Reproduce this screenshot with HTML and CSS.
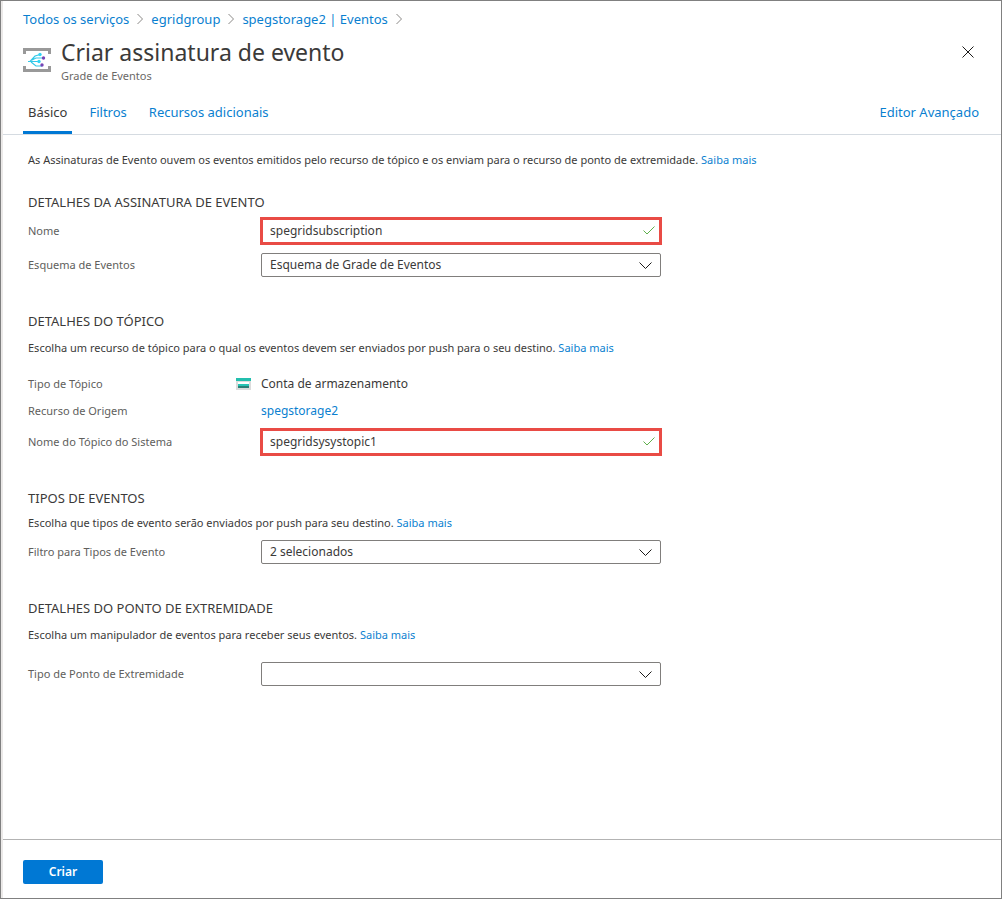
FILE: index.html
```html
<!DOCTYPE html>
<html lang="pt-BR">
<head>
<meta charset="utf-8">
<meta name="viewport" content="width=device-width, initial-scale=1">
<title>Criar assinatura de evento</title>
<link rel="stylesheet" href="styles.css">
</head>
<body>
<form class="blade">
  <header class="header">
    <nav class="breadcrumb" aria-label="Trilha">
      <a href="#">Todos os serviços</a>
      <svg class="crumb-sep" viewBox="0 0 6 12"><path d="M0.5 1l5 5-5 5"/></svg>
      <a href="#">egridgroup</a>
      <svg class="crumb-sep" viewBox="0 0 6 12"><path d="M0.5 1l5 5-5 5"/></svg>
      <a href="#">spegstorage2 | Eventos</a>
      <svg class="crumb-sep" viewBox="0 0 6 12"><path d="M0.5 1l5 5-5 5"/></svg>
    </nav>
    <div class="title-bar">
      <svg class="title-icon" viewBox="0 0 28 26">
        <path fill="#999" d="M0 1h28v6h-3V4H3v3H0zM0 19h3v3h22v-3h3v6H0z"/>
        <g fill="none" stroke="#32c8e8" stroke-width="1.2">
          <path d="M5 14.500h11M7 14.500l5-5.500 5-1.500M9 13l4-2h6M8 15l5 4h6"/>
        </g>
        <g fill="#32d4f5"><circle cx="17" cy="7.500" r="1.700"/><circle cx="16" cy="14.500" r="1.700"/></g>
        <g fill="#7545b5"><circle cx="20.500" cy="11" r="1.700"/><circle cx="19" cy="18" r="1.700"/></g>
      </svg>
      <div class="title-text">
        <h1 class="title">Criar assinatura de evento</h1>
        <p class="subtitle">Grade de Eventos</p>
      </div>
      <button class="close" type="button" aria-label="Fechar">
        <svg viewBox="0 0 12 12"><path d="M0.500 0.500l11 11M11.500 0.500l-11 11"/></svg>
      </button>
    </div>
    <nav class="tabs" aria-label="Seções">
      <a class="tab tab-active" href="#" aria-current="page">Básico</a>
      <a class="tab" href="#">Filtros</a>
      <a class="tab" href="#">Recursos adicionais</a>
      <a class="tab tab-end" href="#">Editor Avançado</a>
    </nav>
  </header>

  <main class="content">
    <p class="text">As Assinaturas de Evento ouvem os eventos emitidos pelo recurso de tópico e os enviam para o recurso de ponto de extremidade. <a href="#">Saiba mais</a></p>

    <section class="section section-first">
      <h2 class="heading">DETALHES DA ASSINATURA DE EVENTO</h2>
      <div class="rows">
        <div class="row">
          <label class="label" for="name">Nome</label>
          <div class="field">
            <input class="control control-marked" id="name" type="text" value="spegridsubscription">
            <svg class="check" viewBox="0 0 12 9"><path d="M0.500 4.500l3.500 3.500 7.500-7.500"/></svg>
          </div>
        </div>
        <div class="row">
          <label class="label" for="schema">Esquema de Eventos</label>
          <div class="field">
            <select class="control" id="schema"><option>Esquema de Grade de Eventos</option></select>
            <svg class="chevron" viewBox="0 0 13 8"><path d="M0.500 0.500l6 6 6-6"/></svg>
          </div>
        </div>
      </div>
    </section>

    <section class="section">
      <h2 class="heading">DETALHES DO TÓPICO</h2>
      <p class="text">Escolha um recurso de tópico para o qual os eventos devem ser enviados por push para o seu destino. <a href="#">Saiba mais</a></p>
      <div class="rows rows-topic">
        <div class="row">
          <span class="label">Tipo de Tópico</span>
          <span class="value value-icon">
            <svg class="storage" viewBox="0 0 15 12">
              <path fill="#dcdcdc" d="M0 3h15v9H0z"/>
              <path fill="#23bfae" d="M0 0h15v3H0z"/>
              <path fill="#fff" d="M2 4h11v2H2z"/>
              <path fill="#28c4b4" d="M2 6h11v2H2z"/>
              <path fill="#2b8077" d="M2 8h11v2H2z"/>
            </svg>
            Conta de armazenamento
          </span>
        </div>
        <div class="row">
          <span class="label">Recurso de Origem</span>
          <a class="value" href="#">spegstorage2</a>
        </div>
        <div class="row">
          <label class="label" for="topic">Nome do Tópico do Sistema</label>
          <div class="field">
            <input class="control control-marked" id="topic" type="text" value="spegridsysystopic1">
            <svg class="check" viewBox="0 0 12 9"><path d="M0.500 4.500l3.500 3.500 7.500-7.500"/></svg>
          </div>
        </div>
      </div>
    </section>

    <section class="section section-types">
      <h2 class="heading">TIPOS DE EVENTOS</h2>
      <p class="text">Escolha que tipos de evento serão enviados por push para seu destino. <a href="#">Saiba mais</a></p>
      <div class="rows">
        <div class="row">
          <label class="label" for="types">Filtro para Tipos de Evento</label>
          <div class="field">
            <select class="control" id="types"><option>2 selecionados</option></select>
            <svg class="chevron" viewBox="0 0 13 8"><path d="M0.500 0.500l6 6 6-6"/></svg>
          </div>
        </div>
      </div>
    </section>

    <section class="section">
      <h2 class="heading">DETALHES DO PONTO DE EXTREMIDADE</h2>
      <p class="text">Escolha um manipulador de eventos para receber seus eventos. <a href="#">Saiba mais</a></p>
      <div class="rows rows-endpoint">
        <div class="row">
          <label class="label" for="endpoint">Tipo de Ponto de Extremidade</label>
          <div class="field">
            <select class="control" id="endpoint"><option></option></select>
            <svg class="chevron" viewBox="0 0 13 8"><path d="M0.500 0.500l6 6 6-6"/></svg>
          </div>
        </div>
      </div>
    </section>
  </main>

  <footer class="footer">
    <button class="create" type="button">Criar</button>
  </footer>
</form>
</body>
</html>
```
FILE: styles.css
```css
* { box-sizing: border-box; }
body {
  margin: 0;
  font-family: "Noto Sans", "Open Sans", sans-serif;
  font-size: 13px;
  line-height: 20px;
  color: #3b3a39;
  background: #fff;
}
h1, h2, p { margin: 0; font-weight: 400; }
a { color: #0a7fd0; text-decoration: none; }
svg { display: block; fill: none; }

.blade {
  display: flex;
  flex-direction: column;
  min-height: 100vh;
  border: 1px solid #808080;
  box-shadow: inset 2px 0 #ebe9e8;
  padding-left: 2px;
}

.header { border-bottom: 1px solid #d5dbe1; }
.breadcrumb {
  display: flex;
  align-items: center;
  gap: 8px;
  padding: 8px 20px 0;
}
.crumb-sep { width: 6px; height: 12px; stroke: #8a8886; }

.title-bar {
  display: flex;
  align-items: flex-start;
  gap: 10px;
  padding: 8px 19px 0 20px;
}
.title-icon { width: 28px; height: 26px; margin-top: 10px; }
.title-text { flex: 1; }
.title { font-size: 23px; line-height: 30px; font-weight: 450; }
.subtitle { font-size: 11px; line-height: 18px; color: #6b6967; }
.close {
  margin-top: 1px;
  padding: 8px;
  border: 0;
  background: none;
}
.close svg { width: 12px; height: 12px; stroke: #1b1a19; }

.tabs { display: flex; gap: 12px; padding: 8px 17px 0 20px; }
.tab { padding: 9px 5px; border-bottom: 3px solid transparent; }
.tab-active { color: #3b3a39; border-bottom-color: #0078d4; }
.tab-end { margin-left: auto; }

.content { flex: 1; padding: 15px 25px 20px; }
.text { font-size: 11px; }
.section { margin-top: 34px; }
.section-first { margin-top: 22px; }
.section-types { margin-top: 32px; }
.heading { font-size: 13px; line-height: 20px; }
.section .text { margin-top: 7px; }
.section-types .text { margin-top: 5px; }
.rows { display: grid; gap: 8px; margin-top: 5px; }
.section-types .rows { margin-top: 7px; }
.rows-topic { gap: 7px; margin-top: 16px; }
.rows-endpoint { margin-top: 17px; }
.row {
  display: grid;
  grid-template-columns: 233px minmax(0, 400px);
  align-items: center;
}
.label { font-size: 11px; color: #605e5c; }
.value { font-size: 12px; }
.value-icon { display: flex; align-items: center; gap: 10px; margin-left: -25px; }
.storage { width: 15px; height: 12px; }

.field { position: relative; }
.control {
  display: block;
  width: 100%;
  height: 24px;
  padding: 0 28px 0 8px;
  border: 1px solid #807e7c;
  border-radius: 2px;
  background: #fff;
  color: #3b3a39;
  font: inherit;
  font-size: 12px;
  appearance: none;
}
.control-marked {
  height: 26px;
  margin: 1px 0;
  padding-left: 7px;
  padding-bottom: 2px;
  border: 2px solid #e94b45;
  border-radius: 0;
  box-shadow: 0 0 0 1px #e94b45;
}
.check, .chevron { position: absolute; pointer-events: none; }
.check { right: 6px; top: 9px; width: 12px; height: 9px; stroke: #5fb04c; }
.chevron { right: 9px; top: 9px; width: 13px; height: 8px; stroke: #1b1a19; }

.footer { padding: 20px; padding-bottom: 14px; border-top: 1px solid #b3b3b3; }
.create {
  min-width: 80px;
  height: 24px;
  padding: 0 12px;
  border: 0;
  border-radius: 2px;
  background: #0078d4;
  color: #fff;
  font: inherit;
  font-size: 12px;
  font-weight: 600;
}
```
